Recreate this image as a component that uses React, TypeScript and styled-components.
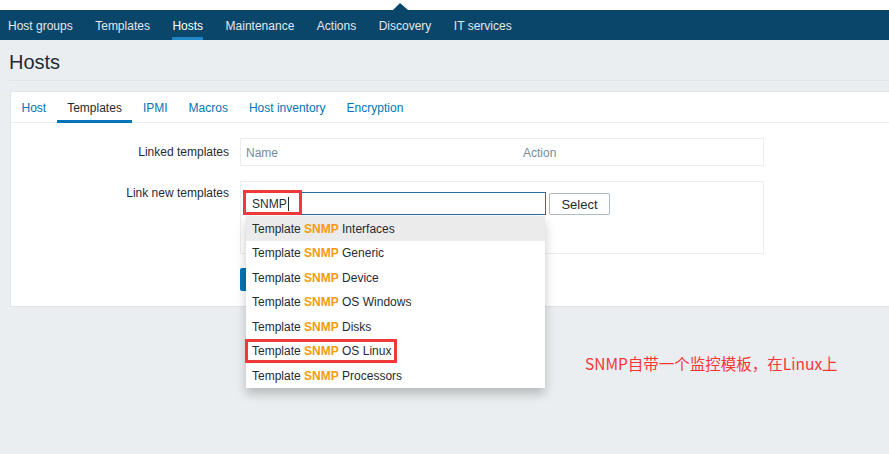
import styled, { createGlobalStyle } from 'styled-components';

const GlobalStyle = createGlobalStyle`
  html, body {
    margin: 0;
    padding: 0;
    background: #ebeef0;
  }
  body {
    font-family: "Liberation Sans", Arial, sans-serif;
    font-size: 12px;
    color: #1f2c33;
  }
  * {
    box-sizing: border-box;
  }
`;

const Page = styled.div`
  min-height: 454px;
  background: #ebeef0;
  overflow: hidden;
  position: relative;
`;

const TopStrip = styled.div`
  height: 10px;
  background: #ffffff;
  position: relative;
`;

const Arrow = styled.div`
  position: absolute;
  left: 393px;
  top: 3px;
  width: 0;
  height: 0;
  border-left: 7px solid transparent;
  border-right: 8px solid transparent;
  border-bottom: 7px solid #0a466a;
`;

const Nav = styled.nav`
  height: 30px;
  background: #0a466a;
  display: flex;
  align-items: stretch;
  gap: 22.5px;
  padding-left: 8px;
`;

const NavItem = styled.a<{ $active?: boolean }>`
  display: flex;
  align-items: center;
  color: ${(p) => (p.$active ? '#ffffff' : '#e2e8ec')};
  font-size: 12px;
  text-decoration: none;
  border-bottom: 3px solid ${(p) => (p.$active ? '#1f86c8' : 'transparent')};
  padding-top: 5px;
`;

const Main = styled.div`
  padding-left: 9px;
`;

const Header = styled.div`
  height: 41px;
  display: flex;
  align-items: center;
  padding-top: 5px;
  border-bottom: 1px solid #dfe4e7;
`;

const Title = styled.h1`
  margin: 0;
  font-size: 20px;
  font-weight: 400;
  color: #1f2c33;
`;

const Panel = styled.div`
  margin: 10px 0 0 1px;
  background: #ffffff;
  border: 1px solid #dfe4e7;
  border-right: none;
`;

const Tabs = styled.div`
  display: flex;
  height: 31px;
  border-bottom: 1px solid #ebeef0;
`;

const Tab = styled.a<{ $active?: boolean }>`
  display: flex;
  align-items: center;
  padding: 0 10.5px;
  margin-bottom: -1px;
  font-size: 12px;
  text-decoration: none;
  color: ${(p) => (p.$active ? '#1f2c33' : '#0275b8')};
  border-bottom: 3px solid ${(p) => (p.$active ? '#0275b8' : 'transparent')};
  padding-top: 3px;
`;

const Form = styled.div`
  display: grid;
  grid-template-columns: 218px 524px;
  column-gap: 11px;
  row-gap: 15px;
  padding: 15px 0 15px 0;
`;

const Label = styled.div<{ $top: number }>`
  text-align: right;
  padding-top: ${(p) => p.$top}px;
  line-height: 14px;
  font-size: 12px;
  color: #1f2c33;
`;

const TableBox = styled.div`
  height: 28px;
  border: 1px solid #ebeef0;
  display: grid;
  grid-template-columns: 277px 1fr;
  align-items: center;
  padding: 2px 0 0 5px;
`;

const HeadCell = styled.span`
  color: #768d99;
  font-size: 12px;
`;

const LinkBox = styled.div`
  height: 73px;
  border: 1px solid #ebeef0;
  padding: 10px 4px;
  display: flex;
  align-items: flex-start;
  gap: 3px;
`;

const InputWrap = styled.div`
  position: relative;
`;

const TextInput = styled.div`
  width: 301px;
  height: 23px;
  border: 1px solid #2b6c9e;
  display: flex;
  align-items: center;
  padding-left: 6px;
  font-size: 12px;
  color: #1f2c33;
  background: #ffffff;
`;

const Caret = styled.span`
  display: inline-block;
  width: 1px;
  height: 14px;
  background: #1f2c33;
  margin-left: 1px;
`;

const SelectButton = styled.button`
  height: 22px;
  width: 61px;
  margin-top: 1px;
  background: #ffffff;
  border: 1px solid #acbbc2;
  border-radius: 2px;
  font-family: "Liberation Sans", Arial, sans-serif;
  font-size: 13px;
  color: #1f2c33;
  padding: 0;
`;

const Mark = styled.div`
  position: absolute;
  border: 3px solid #f03a3a;
  pointer-events: none;
`;

const InputMark = styled(Mark)`
  left: -2px;
  top: -2px;
  width: 59px;
  height: 25px;
`;

const Dropdown = styled.ul`
  position: absolute;
  left: 1px;
  top: 24px;
  width: 299px;
  margin: 0;
  padding: 0;
  list-style: none;
  background: #ffffff;
  box-shadow: 0 6px 10px 0 rgba(0, 0, 0, 0.22);
  z-index: 5;
`;

const Option = styled.li<{ $hover?: boolean }>`
  position: relative;
  height: 24.5px;
  display: flex;
  align-items: center;
  padding: 1px 0 0 6px;
  font-size: 12px;
  color: #1f2c33;
  background: ${(p) => (p.$hover ? '#ebebeb' : '#ffffff')};
  white-space: pre;
`;

const Match = styled.b`
  color: #f39c12;
  font-weight: 700;
`;

const OptionMark = styled(Mark)`
  left: -1px;
  top: 0;
  width: 152px;
  height: 24px;
`;

const ButtonRow = styled.div`
  grid-column: 2;
  margin-top: -1px;
`;

const PrimaryButton = styled.button`
  display: block;
  height: 23px;
  width: 70px;
  background: #0275b8;
  border: none;
  border-radius: 2px;
`;

const Note = styled.div`
  position: absolute;
  left: 585px;
  top: 352px;
  font-family: "Noto Sans CJK SC", "Liberation Sans", sans-serif;
  font-size: 15.5px;
  line-height: 22px;
  color: #f53636;
`;

const navItems = ['Host groups', 'Templates', 'Hosts', 'Maintenance', 'Actions', 'Discovery', 'IT services'];
const tabs = ['Host', 'Templates', 'IPMI', 'Macros', 'Host inventory', 'Encryption'];
const options = ['Interfaces', 'Generic', 'Device', 'OS Windows', 'Disks', 'OS Linux', 'Processors'];

export default function App() {
  return (
    <Page>
      <GlobalStyle />
      <TopStrip>
        <Arrow />
      </TopStrip>
      <Nav>
        {navItems.map((n) => (
          <NavItem key={n} $active={n === 'Hosts'}>
            {n}
          </NavItem>
        ))}
      </Nav>
      <Main>
        <Header>
          <Title>Hosts</Title>
        </Header>
        <Panel>
          <Tabs>
            {tabs.map((t) => (
              <Tab key={t} $active={t === 'Templates'}>
                {t}
              </Tab>
            ))}
          </Tabs>
          <Form>
            <Label $top={7}>Linked templates</Label>
            <TableBox>
              <HeadCell>Name</HeadCell>
              <HeadCell>Action</HeadCell>
            </TableBox>
            <Label $top={5}>Link new templates</Label>
            <LinkBox>
              <InputWrap>
                <TextInput>
                  SNMP
                  <Caret />
                </TextInput>
                <InputMark />
                <Dropdown>
                  {options.map((o, i) => (
                    <Option key={o} $hover={i === 0}>
                      {'Template '}
                      <Match>SNMP</Match>
                      {' ' + o}
                      {o === 'OS Linux' && <OptionMark />}
                    </Option>
                  ))}
                </Dropdown>
              </InputWrap>
              <SelectButton>Select</SelectButton>
            </LinkBox>
            <ButtonRow>
              <PrimaryButton aria-label="Update" />
            </ButtonRow>
          </Form>
        </Panel>
      </Main>
      <Note>SNMP自带一个监控模板，在Linux上</Note>
    </Page>
  );
}
